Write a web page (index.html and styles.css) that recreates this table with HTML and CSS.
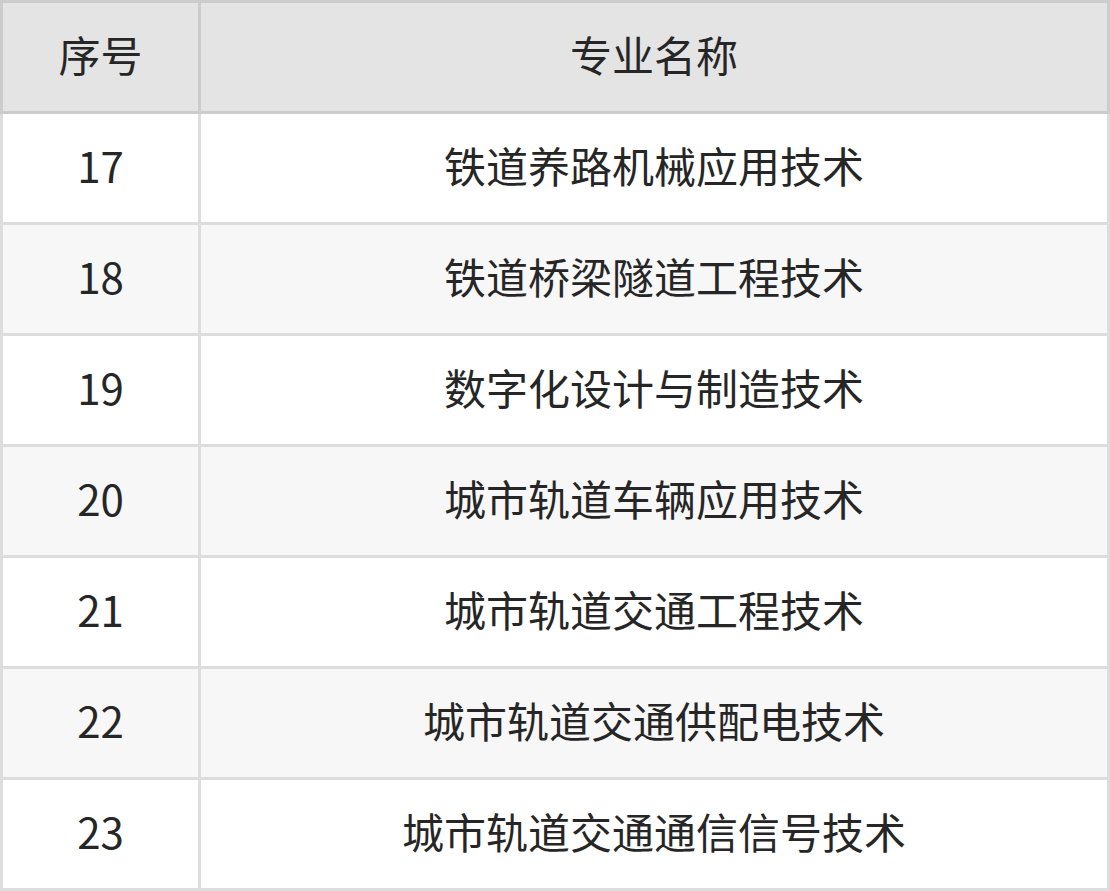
FILE: index.html
```html
<!DOCTYPE html>
<html lang="zh">
<head>
<meta charset="utf-8">
<link rel="stylesheet" href="styles.css">
</head>
<body>
<table class="majors">
  <thead>
    <tr><th class="col-no">序号</th><th>专业名称</th></tr>
  </thead>
  <tbody>
    <tr><td>17</td><td>铁道养路机械应用技术</td></tr>
    <tr><td>18</td><td>铁道桥梁隧道工程技术</td></tr>
    <tr><td>19</td><td>数字化设计与制造技术</td></tr>
    <tr><td>20</td><td>城市轨道车辆应用技术</td></tr>
    <tr><td>21</td><td>城市轨道交通工程技术</td></tr>
    <tr><td>22</td><td>城市轨道交通供配电技术</td></tr>
    <tr><td>23</td><td>城市轨道交通通信信号技术</td></tr>
  </tbody>
</table>
</body>
</html>
```

FILE: styles.css
```css
html, body {
  margin: 0;
  padding: 0;
  background: #fff;
}
.majors {
  width: 1110px;
  border-collapse: collapse;
  font-family: "Noto Sans CJK SC", "Noto Sans", sans-serif;
  font-size: 42px;
  color: #262626;
  table-layout: fixed;
}
.majors th,
.majors td {
  text-align: center;
  vertical-align: middle;
  padding: 0 0 8px;
  height: 100px;
  font-weight: normal;
}
.majors th {
  background: #e4e4e4;
  border: 3px solid #cccccc;
}
.majors td {
  border: 3px solid #dddddd;
}
.majors .col-no {
  width: 195px;
}
.majors tbody tr:nth-child(even) td {
  background: #f7f7f7;
}
```
